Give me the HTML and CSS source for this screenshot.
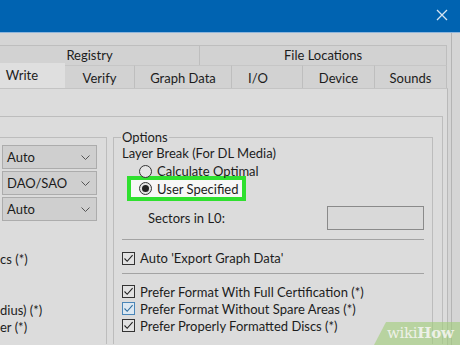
FILE: index.html
```html
<!DOCTYPE html>
<html>
<head>
<meta charset="utf-8">
<link rel="stylesheet" href="styles.css">
</head>
<body>
<div class="titlebar">
  <svg class="close" width="12" height="12" viewBox="0 0 12 12"><path d="M1 1L11 11M11 1L1 11" stroke="#d6e4f2" stroke-width="1.3" fill="none"/></svg>
</div>
<div class="window">
  <div class="tabs">
    <div class="tabrow row1">
      <div class="tab t-reg">Registry</div>
      <div class="tab t-file">File Locations</div>
    </div>
    <div class="tabrow row2">
      <div class="tab sel t-write">Write</div>
      <div class="tab t-verify">Verify</div>
      <div class="tab t-graph">Graph Data</div>
      <div class="tab t-io">I/O</div>
      <div class="tab t-device">Device</div>
      <div class="tab t-sounds">Sounds</div>
    </div>
  </div>
  <div class="panel">
    <div class="frame">
      <div class="leftgroup">
        <div class="combo"><span>Auto</span><svg width="9" height="5" viewBox="0 0 9 5"><path d="M0.5 0.5L4.5 4.5L8.5 0.5" stroke="#555" fill="none"/></svg></div>
        <div class="combo"><span>DAO/SAO</span><svg width="9" height="5" viewBox="0 0 9 5"><path d="M0.5 0.5L4.5 4.5L8.5 0.5" stroke="#555" fill="none"/></svg></div>
        <div class="combo"><span>Auto</span><svg width="9" height="5" viewBox="0 0 9 5"><path d="M0.5 0.5L4.5 4.5L8.5 0.5" stroke="#555" fill="none"/></svg></div>
        <div class="leftlines">
          <div class="line">cs (*)</div>
          <div class="line">&nbsp;</div>
          <div class="line">&nbsp;</div>
          <div class="line">dius) (*)</div>
          <div class="line">er (*)</div>
        </div>
      </div>
      <fieldset class="options">
        <legend>Options</legend>
        <div class="label">Layer Break (For DL Media)</div>
        <div class="radio-row"><span class="radio"></span><span>Calculate Optimal</span></div>
        <div class="highlight"><span class="radio on"></span><span>User Specified</span></div>
        <div class="sectors"><span>Sectors in L0:</span><span class="input"></span></div>
        <div class="sep"></div>
        <div class="check-row first"><span class="check"><svg width="11" height="11" viewBox="0 0 11 11"><path d="M1.5 5.5L4.2 8.3L9.6 2.2" stroke="#222" stroke-width="1.1" fill="none"/></svg></span><span>Auto 'Export Graph Data'</span></div>
        <div class="sep sep2"></div>
        <div class="checks">
          <div class="check-row"><span class="check"><svg width="11" height="11" viewBox="0 0 11 11"><path d="M1.5 5.5L4.2 8.3L9.6 2.2" stroke="#222" stroke-width="1.1" fill="none"/></svg></span><span>Prefer Format With Full Certification (*)</span></div>
          <div class="check-row"><span class="check hover"><svg width="11" height="11" viewBox="0 0 11 11"><path d="M1.5 5.5L4.2 8.3L9.6 2.2" stroke="#2f6e9e" stroke-width="1.1" fill="none"/></svg></span><span>Prefer Format Without Spare Areas (*)</span></div>
          <div class="check-row"><span class="check"><svg width="11" height="11" viewBox="0 0 11 11"><path d="M1.5 5.5L4.2 8.3L9.6 2.2" stroke="#222" stroke-width="1.1" fill="none"/></svg></span><span>Prefer Properly Formatted Discs (*)</span></div>
        </div>
      </fieldset>
    </div>
  </div>
</div>
<div class="watermark"><span class="wiki">wiki</span><span class="how">How</span></div>
</body>
</html>
```
FILE: styles.css
```css
html, body {
  margin: 0;
  padding: 0;
  overflow: hidden;
}
body {
  width: 460px;
  height: 345px;
  background: #d5d5d5;
  font-family: Lato, "Noto Sans", sans-serif;
  font-size: 13px;
  color: #1c1c1c;
  position: relative;
}
.titlebar {
  height: 32px;
  background: #0063b1;
  border-bottom: 1px solid #8fb6dc;
  display: flex;
  justify-content: flex-end;
  align-items: center;
  padding-right: 12px;
}
.close {
  display: block;
  margin-top: -2px;
}
.window {
  width: 452px;
  height: 312px;
  overflow: hidden;
  border-right: 1px solid #b4b4b4;
  padding-top: 12px;
  box-sizing: border-box;
}
.tabs {
  margin-left: -21px;
  width: 468px;
}
.tabrow {
  display: flex;
}
.row1 {
  height: 20px;
}
.row2 {
  height: 23px;
  align-items: flex-end;
}
.tab {
  box-sizing: border-box;
  background: #d2d2d2;
  border: 1px solid #bebebe;
  border-bottom: none;
  text-align: center;
  white-space: nowrap;
}
.row1 .tab {
  height: 20px;
  line-height: 19px;
}
.row2 .tab {
  height: 23px;
  line-height: 24px;
  border-top-color: #c6c6c6;
}
.t-reg { width: 221px; }
.t-file { width: 247px; border-left: none; }
.t-write { width: 86px; }
.t-verify { width: 70px; border-left: none; }
.t-graph { width: 97px; border-left: none; }
.t-io { width: 71px; border-left: none; padding-right: 18px; }
.t-device { width: 72px; border-left: none; }
.t-sounds { width: 72px; border-left: none; }
.row2 .tab.sel {
  height: 25px;
  line-height: 22px;
  background: #dfdfdf;
  border-color: #dfdfdf;
  position: relative;
  z-index: 1;
}
.panel {
  width: 448px;
  height: 257px;
  box-sizing: border-box;
  background: #dcdcdc;
  border-right: 1px solid #b9b9b9;
  border-top: 1px solid #c4c4c4;
  padding-top: 27px;
  padding-right: 4px;
  overflow: hidden;
}
.frame {
  border-top: 1px solid #bdbdbd;
  border-right: 1px solid #bdbdbd;
  height: 228px;
  box-sizing: border-box;
  display: flex;
  align-items: flex-start;
  padding-top: 12px;
  padding-right: 9px;
  gap: 6px;
}
.leftgroup {
  width: 107px;
  flex: none;
  box-sizing: border-box;
  margin-top: 8px;
  border-top: 1px solid #bdbdbd;
  border-right: 1px solid #bdbdbd;
  padding-top: 7px;
  height: 207px;
}
.combo {
  width: 95px;
  height: 24px;
  margin-left: 2px;
  margin-bottom: 2px;
  box-sizing: border-box;
  background: #cfcfcf;
  border: 1px solid #acacac;
  display: flex;
  align-items: center;
  justify-content: space-between;
  padding: 0 6px 0 4px;
}
.leftlines {
  margin-top: 30px;
}
.line {
  height: 17px;
  line-height: 17px;
  white-space: nowrap;
}
.options {
  margin: 0;
  width: 321px;
  box-sizing: border-box;
  border: 1px solid #bcbcbc;
  border-bottom: none;
  padding: 0 8px 0 8px;
  height: 215px;
  min-width: 0;
}
.options legend {
  padding: 0 1px;
  margin-left: -1px;
  line-height: 16px;
}
.label {
  line-height: 16px;
  height: 16px;
}
.radio-row {
  display: flex;
  align-items: center;
  height: 16px;
  margin-top: 2px;
  padding-left: 17px;
  gap: 5px;
  position: relative;
  z-index: 2;
}
.radio {
  width: 13px;
  height: 13px;
  box-sizing: border-box;
  border: 1px solid #333;
  border-radius: 50%;
  background: #e4e4e4;
  display: flex;
  align-items: center;
  justify-content: center;
  flex: none;
}
.radio.on::after {
  content: "";
  width: 7px;
  height: 7px;
  border-radius: 50%;
  background: #222;
}
.highlight {
  width: 119px;
  height: 25px;
  box-sizing: border-box;
  margin-left: 5px;
  margin-top: -3px;
  border: 4px solid #2fe02f;
  background: #f7f7f7;
  display: flex;
  align-items: center;
  padding-left: 8px;
  gap: 5px;
  position: relative;
  z-index: 1;
}
.sectors {
  display: flex;
  align-items: center;
  justify-content: space-between;
  height: 24px;
  margin-top: 5px;
  padding-left: 26px;
}
.input {
  width: 97px;
  height: 24px;
  box-sizing: border-box;
  border: 1px solid #8a8a8a;
  background: #d9d9d9;
}
.sep {
  height: 1px;
  background: #a3a3a3;
  margin-top: 9px;
}
.sep2 {
  margin-top: 7px;
}
.check-row {
  display: flex;
  align-items: center;
  height: 17px;
  gap: 5px;
}
.check-row.first {
  margin-top: 10px;
  height: 16px;
}
.checks {
  margin-top: 9px;
}
.check {
  width: 13px;
  height: 13px;
  box-sizing: border-box;
  border: 1px solid #333;
  background: #e2e2e2;
  display: flex;
  align-items: center;
  justify-content: center;
  flex: none;
}
.check.hover {
  border-color: #4a86b8;
  background: #dce8f2;
}
.watermark {
  position: absolute;
  right: 0;
  bottom: 0;
  width: 86px;
  height: 23px;
  background: rgba(160, 205, 120, 0.6);
  clip-path: polygon(12px 0, 100% 0, 100% 100%, 0 100%);
  font-family: "DejaVu Serif", serif;
  font-size: 15px;
  line-height: 23px;
  color: rgba(245, 245, 240, 0.9);
  padding-left: 13px;
  box-sizing: border-box;
  letter-spacing: -0.3px;
}
.wiki {
  font-weight: normal;
}
.how {
  font-weight: bold;
}
```
